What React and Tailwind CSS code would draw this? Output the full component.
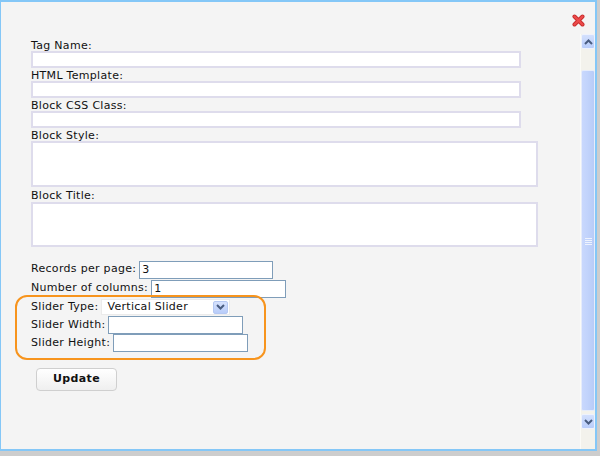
import React from 'react';

const CloseIcon = () => (
  <svg width="13" height="13" viewBox="0 0 13 13">
    <path d="M2.5 2.5 L10.5 10.5 M10.5 2.5 L2.5 10.5" stroke="#c62a2a" strokeWidth="4" strokeLinecap="round" />
    <path d="M2.5 2.5 L10.5 10.5 M10.5 2.5 L2.5 10.5" stroke="#ec4a4a" strokeWidth="2.4" strokeLinecap="round" />
  </svg>
);

const Chevron = ({ down }) => (
  <svg width="9" height="6" viewBox="0 0 9 6">
    <path d={down ? 'M1 1 L4.5 4.5 L8 1' : 'M1 5 L4.5 1.5 L8 5'} stroke="#4a5d80" strokeWidth="2" fill="none" />
  </svg>
);

const ScrollButton = ({ down }) => (
  <div className="h-[15px] w-[14px] rounded-[2px] border border-[#eef2fd] bg-gradient-to-b from-[#d3e0fd] to-[#b9cdfa] flex items-center justify-center">
    <Chevron down={down} />
  </div>
);

const Scrollbar = () => (
  <div className="w-[15px] flex flex-col pb-[20px] bg-[#f3f2ec] border-l border-[#fbfbf7]">
    <ScrollButton />
    <div className="flex-1 flex flex-col pt-[21px] pb-[3px]">
      <div className="flex-1 w-[14px] rounded-[2px] border border-[#e6ecfb] bg-gradient-to-r from-[#c9d8fd] via-[#c1d3fb] to-[#b8cbf7] flex items-center justify-center">
        <div className="flex flex-col gap-[1px] mt-[1px]">
          <div className="h-[1px] w-[7px] bg-[#eef3fe]" />
          <div className="h-[1px] w-[7px] bg-[#eef3fe]" />
          <div className="h-[1px] w-[7px] bg-[#eef3fe]" />
          <div className="h-[1px] w-[7px] bg-[#eef3fe]" />
        </div>
      </div>
    </div>
    <ScrollButton down />
  </div>
);

const Label = ({ children, tall }) => (
  <div className={`${tall ? 'h-[15px] pt-[3px]' : 'h-[13px] pt-[2px]'} leading-[11px] whitespace-nowrap`}>{children}</div>
);

const Row = ({ label, h, children }) => (
  <div className={`flex items-center gap-[3px] ${h}`}>
    <span className="whitespace-nowrap">{label}</span>
    {children}
  </div>
);

const TextInput = ({ w, value }) => (
  <div className={`${w} h-[18px] border border-[#7f9db9] bg-white px-[2px] leading-[16px]`}>{value}</div>
);

export default function App() {
  return (
    <div className="w-[600px] h-[456px] bg-[#cdcdcd] font-['DejaVu_Sans',Verdana,sans-serif] text-[11px] tracking-[0.3px] text-[#111]">
      <div className="w-[597px] h-[451px] bg-[#f4f4f4] border-t-2 border-r-2 border-b-2 border-l border-[#84c7f7] flex flex-col">
        <div className="h-[32px] flex justify-end items-start pt-[12px] pr-[10px]">
          <CloseIcon />
        </div>
        <div className="flex-1 flex">
          <div className="relative flex-1 pl-[30px] pt-[4px]">
            <Label>Tag Name:</Label>
            <div className="w-[490px] h-[17px] border-2 border-[#dedcec] bg-white" />
            <Label>HTML Template:</Label>
            <div className="w-[490px] h-[17px] border-2 border-[#dedcec] bg-white" />
            <Label>Block CSS Class:</Label>
            <div className="w-[490px] h-[17px] border-2 border-[#dedcec] bg-white" />
            <Label>Block Style:</Label>
            <div className="w-[507px] h-[46px] border-2 border-[#dedcec] bg-white" />
            <Label tall>Block Title:</Label>
            <div className="w-[507px] h-[45px] border-2 border-[#dedcec] bg-white" />

            <div className="mt-[13px]">
              <Row label="Records per page:" h="h-[19px]">
                <div className="self-end"><TextInput w="w-[134px]" value="3" /></div>
              </Row>
              <Row label="Number of columns:" h="h-[19px]">
                <div className="self-end"><TextInput w="w-[135px]" value="1" /></div>
              </Row>
              <Row label="Slider Type:" h="h-[18px]">
                <div className="w-[129px] h-[16px] border border-[#ebebeb] bg-white flex items-center justify-between pl-[5px] pr-[1px]">
                  <span className="leading-[14px]">Vertical Slider</span>
                  <div className="w-[15px] h-[13px] rounded-[2px] border border-[#b5c8f2] bg-gradient-to-b from-[#d6e2fd] to-[#b8ccf9] flex items-center justify-center">
                    <Chevron down />
                  </div>
                </div>
              </Row>
              <Row label="Slider Width:" h="h-[18px]">
                <div className="self-start"><TextInput w="w-[135px]" /></div>
              </Row>
              <Row label="Slider Height:" h="h-[19px]">
                <div className="self-start"><TextInput w="w-[135px]" /></div>
              </Row>
            </div>

            <button className="mt-[15px] ml-[5px] w-[81px] h-[23px] rounded-[4px] border border-[#cfcfcf] bg-gradient-to-b from-white to-[#efefef] font-bold text-[11px] tracking-[0.4px] text-[#111]">
              Update
            </button>

            <div className="absolute left-[14px] top-[261px] w-[251px] h-[65px] rounded-[12px] border-2 border-[#f7941d]" />
          </div>
          <Scrollbar />
        </div>
      </div>
    </div>
  );
}
